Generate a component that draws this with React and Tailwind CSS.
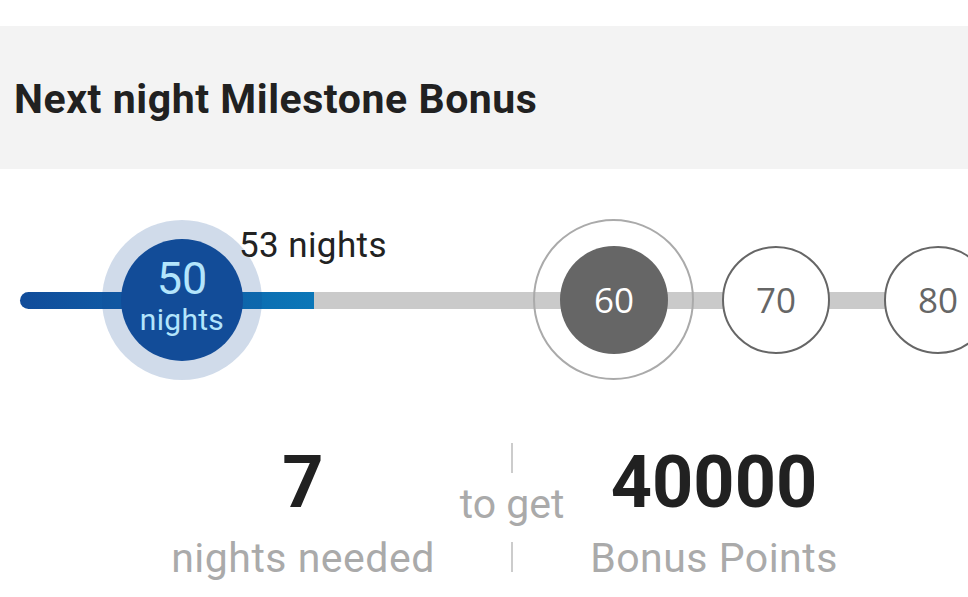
import React from "react";

export default function App() {
  return (
    <div className="w-[968px] h-[597px] overflow-hidden bg-white font-['Roboto',sans-serif]">
      <div className="h-[26px]" />
      <div className="h-[143px] bg-[#f3f3f3] flex items-center pl-[14px] pt-[4px]">
        <h1 className="text-[41px] font-bold leading-none tracking-[0.55px] text-[#212121]">Next night Milestone Bonus</h1>
      </div>

      <div className="relative h-[261px]">
        <div className="flex pt-[123px] pl-[20px]">
          <div className="h-[17px] w-[294px] rounded-l-full bg-gradient-to-r from-[#114c9a] to-[#0b77b8]" />
          <div className="h-[17px] flex-1 bg-[#cacaca]" />
        </div>

        <div className="absolute left-[102px] top-[51px] w-[160px] h-[160px] rounded-full bg-[rgba(18,76,152,0.2)]" />
        <div className="absolute left-[121px] top-[70px] w-[122px] h-[122px] rounded-full bg-[#124c98] flex flex-col items-center text-[#b3e5fc]">
          <span className="block text-[45px] leading-[46px] pt-[17px]">50</span>
          <span className="block text-[30px] leading-[30px] mt-[3px] tracking-[0.3px]">nights</span>
        </div>
        <div className="absolute left-[239px] top-[59px] text-[35px] leading-[35px] tracking-[0.4px] text-[#222]">53 nights</div>

        <div className="absolute left-[533px] top-[50px] w-[161px] h-[161px] rounded-full border-2 border-[#aaaaaa]" />
        <div className="absolute left-[560px] top-[77px] w-[108px] h-[108px] rounded-full bg-[#666666] flex items-center justify-center font-['Open_Sans',sans-serif] text-[35px] text-white">
          60
        </div>
        <div className="absolute left-[722px] top-[77px] w-[108px] h-[108px] rounded-full bg-white border-2 border-[#666666] flex items-center justify-center font-['Open_Sans',sans-serif] text-[35px] text-[#666666]">
          70
        </div>
        <div className="absolute left-[884px] top-[77px] w-[108px] h-[108px] rounded-full bg-white border-2 border-[#666666] flex items-center justify-center font-['Open_Sans',sans-serif] text-[35px] text-[#666666]">
          80
        </div>
      </div>

      <div className="flex items-start ml-[173px] gap-[26px]">
        <div className="w-[260px] flex flex-col items-center pt-[17px]">
          <span className="text-[72px] leading-[72px] font-bold text-[#212121]">7</span>
          <span className="mt-[15px] text-[41px] leading-[48px] tracking-[0.5px] text-[#aaaaaa] whitespace-nowrap">nights needed</span>
        </div>
        <div className="w-[106px] flex flex-col items-center pt-[13px]">
          <div className="w-[2px] h-[30px] bg-[#cccccc]" />
          <span className="mt-[7px] text-[41px] leading-[48px] text-[#aaaaaa] whitespace-nowrap">to get</span>
          <div className="mt-[14px] w-[2px] h-[30px] bg-[#cccccc]" />
        </div>
        <div className="w-[246px] flex flex-col items-center pt-[17px]">
          <span className="text-[72px] leading-[72px] font-bold text-[#212121]">40000</span>
          <span className="mt-[15px] text-[41px] leading-[48px] tracking-[0.5px] text-[#aaaaaa] whitespace-nowrap">Bonus Points</span>
        </div>
      </div>
    </div>
  );
}
